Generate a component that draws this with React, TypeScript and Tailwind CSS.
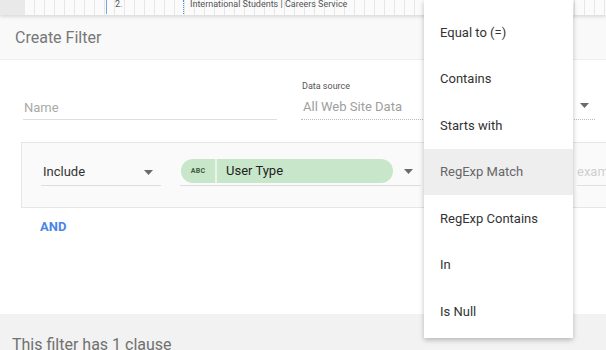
import React from "react";

const Arrow = ({ className = "" }: { className?: string }) => (
  <svg width="9" height="5" viewBox="0 0 9 5" className={"shrink-0 " + className}>
    <path d="M0 0 L9 0 L4.5 5 Z" fill="#6b6b6b" />
  </svg>
);

const items = [
  "Equal to (=)",
  "Contains",
  "Starts with",
  "RegExp Match",
  "RegExp Contains",
  "In",
  "Is Null",
];

export default function App() {
  return (
    <div
      className="relative w-[606px] h-[350px] overflow-hidden bg-white"
      style={{ fontFamily: "Roboto, 'Noto Sans', Arial, sans-serif" }}
    >
      {/* top sheet strip */}
      <div className="relative h-[15px] flex bg-[#fbfbfb] shadow-[0_2px_3px_rgba(0,0,0,0.12)] z-10">
        <div className="w-[25px] h-full bg-[#e9e9e9]" />
        <div className="relative flex-1 h-full bg-[repeating-linear-gradient(90deg,transparent_0,transparent_9px,#e6e6e6_9px,#e6e6e6_10px)]">
          <div className="absolute left-[81px] top-0 h-[14px] w-[1px] bg-[#6fa8dc]" />
          <div className="absolute left-[90px] top-[-2px] text-[9px] leading-[12px] text-[#555]">2.</div>
          <div className="absolute left-[158px] top-0 h-[14px] w-[1px] border-l border-dotted border-[#4a90e2]" />
          <div className="absolute left-[165px] top-[-2px] text-[9px] leading-[12px] text-[#555] whitespace-nowrap">
            International Students | Careers Service
          </div>
        </div>
      </div>

      {/* header */}
      <div className="h-[45px] bg-[#f9f9f9] flex items-center px-[15px] border-b border-[#efefef]">
        <span className="text-[16px] text-[#777] pt-[1px]">Create Filter</span>
      </div>

      {/* fields */}
      <div className="flex items-end pl-[23px] pt-[19px] h-[60px]">
        <div className="w-[254px] shrink-0 border-b border-[#dedede] h-[40px] flex items-end">
          <span className="text-[13px] leading-[22px] text-[#aaa] pl-[1px]">Name</span>
        </div>
        <div className="ml-[24px] w-[294px] shrink-0 border-b border-dotted border-[#bbb] flex flex-col">
          <span className="text-[9px] leading-[11px] text-[#555] pl-[1px]">Data source</span>
          <div className="flex items-center justify-between h-[27px] pt-[2px]">
            <span className="text-[13px] text-[#9e9e9e] pl-[2px]">All Web Site Data</span>
            <Arrow className="mr-[6px] mb-[2px]" />
          </div>
        </div>
      </div>

      {/* clause box */}
      <div className="ml-[21px] w-[620px] mt-[22px] h-[66px] bg-[#fafafa] border border-[#e6e6e6] flex items-start pt-[16px]">
        <div className="ml-[19px] w-[120px] shrink-0 h-[27px] border-b border-[#ddd] flex items-center justify-between">
          <span className="text-[13px] text-[#333] pl-[2px]">Include</span>
          <Arrow className="mr-[8px]" />
        </div>
        <div className="ml-[19px] w-[241px] shrink-0 h-[27px] border-b border-[#ddd] flex items-start">
          <div className="w-[212px] shrink-0 h-[24px] ml-[1px] rounded-full bg-[#c8e6c9] flex items-center">
            <div className="w-[36px] h-full flex items-center justify-center border-r-2 border-[#eaf5ea]">
              <span className="text-[7px] font-bold text-[#3d5c3e] tracking-[0.2px]">ABC</span>
            </div>
            <span className="ml-[9px] text-[13px] text-[#222]">User Type</span>
          </div>
          <Arrow className="ml-[11px] mt-[10px]" />
        </div>
        <div className="ml-[156px] shrink-0 h-[27px] w-[60px] border-b border-[#e0e0e0] flex items-center">
          <span className="text-[13px] text-[#cfcfcf]">example</span>
        </div>
      </div>

      {/* AND */}
      <div className="pl-[40px] pt-[10px] text-[13px] font-bold text-[#4a86e8] leading-[18px]">AND</div>

      {/* footer */}
      <div className="absolute left-0 right-0 top-[314px] bottom-0 bg-[#f2f2f2] px-[12px] pt-[19px]">
        <span className="text-[16px] text-[#707070] leading-[20px]">This filter has 1 clause</span>
      </div>

      {/* dropdown menu */}
      <div className="absolute left-[424px] top-0 w-[149px] h-[338px] bg-white shadow-[0_2px_5px_rgba(0,0,0,0.25)] pt-[9px] z-20">
        {items.map((it, i) => (
          <div
            key={it}
            className={
              "h-[46.5px] flex items-center pl-[16px] text-[13px] " +
              (i === 3 ? "bg-[#eeeeee] text-[#666]" : "text-[#333]")
            }
          >
            {it}
          </div>
        ))}
      </div>
    </div>
  );
}
